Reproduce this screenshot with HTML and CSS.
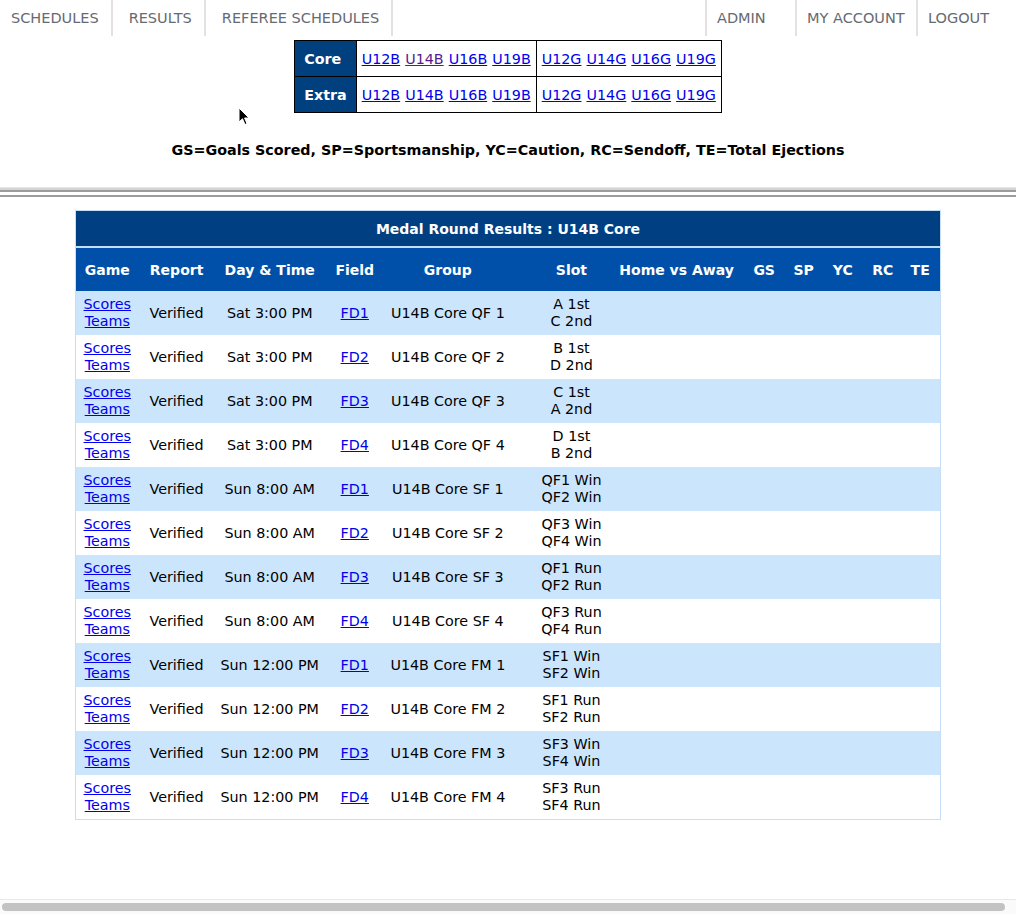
FILE: index.html
```html
<!DOCTYPE html>
<html lang="en">
<head>
<meta charset="utf-8">
<title>Medal Round Results</title>
<link rel="stylesheet" href="styles.css">
</head>
<body>
<nav class="topnav">
  <ul class="nav-left">
    <li class="nav-item first"><a href="#">SCHEDULES</a></li>
    <li class="nav-item"><a href="#">RESULTS</a></li>
    <li class="nav-item"><a href="#">REFEREE SCHEDULES</a></li>
  </ul>
  <ul class="nav-right">
    <li class="nav-item r-admin"><a href="#">ADMIN</a></li>
    <li class="nav-item r-account"><a href="#">MY ACCOUNT</a></li>
    <li class="nav-item r-logout"><a href="#">LOGOUT</a></li>
  </ul>
</nav>

<table class="divisions">
  <tr>
    <th>Core</th>
    <td><a href="#">U12B</a> <a href="#" class="visited">U14B</a> <a href="#">U16B</a> <a href="#">U19B</a></td>
    <td><a href="#">U12G</a> <a href="#">U14G</a> <a href="#">U16G</a> <a href="#">U19G</a></td>
  </tr>
  <tr>
    <th>Extra</th>
    <td><a href="#">U12B</a> <a href="#">U14B</a> <a href="#">U16B</a> <a href="#">U19B</a></td>
    <td><a href="#">U12G</a> <a href="#">U14G</a> <a href="#">U16G</a> <a href="#">U19G</a></td>
  </tr>
</table>

<p class="legend">GS=Goals Scored, SP=Sportsmanship, YC=Caution, RC=Sendoff, TE=Total Ejections</p>

<div class="rule"></div>

<table class="results">
  <colgroup>
    <col class="c-game"><col class="c-report"><col class="c-day"><col class="c-field"><col class="c-group"><col class="c-slot"><col class="c-home"><col class="c-gs"><col class="c-sp"><col class="c-yc"><col class="c-rc"><col class="c-te">
  </colgroup>
  <thead>
    <tr class="title-row"><th colspan="12">Medal Round Results : U14B Core</th></tr>
    <tr class="head-row">
      <th>Game</th><th>Report</th><th>Day &amp; Time</th><th>Field</th><th>Group</th><th class="slot">Slot</th><th>Home vs Away</th><th>GS</th><th>SP</th><th>YC</th><th>RC</th><th>TE</th>
    </tr>
  </thead>
  <tbody>
    <tr class="odd"><td><a href="#">Scores</a><br><a href="#">Teams</a></td><td>Verified</td><td>Sat 3:00 PM</td><td><a href="#">FD1</a></td><td>U14B Core QF 1</td><td class="slot">A 1st<br>C 2nd</td><td></td><td></td><td></td><td></td><td></td><td></td></tr>
    <tr><td><a href="#">Scores</a><br><a href="#">Teams</a></td><td>Verified</td><td>Sat 3:00 PM</td><td><a href="#">FD2</a></td><td>U14B Core QF 2</td><td class="slot">B 1st<br>D 2nd</td><td></td><td></td><td></td><td></td><td></td><td></td></tr>
    <tr class="odd"><td><a href="#">Scores</a><br><a href="#">Teams</a></td><td>Verified</td><td>Sat 3:00 PM</td><td><a href="#">FD3</a></td><td>U14B Core QF 3</td><td class="slot">C 1st<br>A 2nd</td><td></td><td></td><td></td><td></td><td></td><td></td></tr>
    <tr><td><a href="#">Scores</a><br><a href="#">Teams</a></td><td>Verified</td><td>Sat 3:00 PM</td><td><a href="#">FD4</a></td><td>U14B Core QF 4</td><td class="slot">D 1st<br>B 2nd</td><td></td><td></td><td></td><td></td><td></td><td></td></tr>
    <tr class="odd"><td><a href="#">Scores</a><br><a href="#">Teams</a></td><td>Verified</td><td>Sun 8:00 AM</td><td><a href="#">FD1</a></td><td>U14B Core SF 1</td><td class="slot">QF1 Win<br>QF2 Win</td><td></td><td></td><td></td><td></td><td></td><td></td></tr>
    <tr><td><a href="#">Scores</a><br><a href="#">Teams</a></td><td>Verified</td><td>Sun 8:00 AM</td><td><a href="#">FD2</a></td><td>U14B Core SF 2</td><td class="slot">QF3 Win<br>QF4 Win</td><td></td><td></td><td></td><td></td><td></td><td></td></tr>
    <tr class="odd"><td><a href="#">Scores</a><br><a href="#">Teams</a></td><td>Verified</td><td>Sun 8:00 AM</td><td><a href="#">FD3</a></td><td>U14B Core SF 3</td><td class="slot">QF1 Run<br>QF2 Run</td><td></td><td></td><td></td><td></td><td></td><td></td></tr>
    <tr><td><a href="#">Scores</a><br><a href="#">Teams</a></td><td>Verified</td><td>Sun 8:00 AM</td><td><a href="#">FD4</a></td><td>U14B Core SF 4</td><td class="slot">QF3 Run<br>QF4 Run</td><td></td><td></td><td></td><td></td><td></td><td></td></tr>
    <tr class="odd"><td><a href="#">Scores</a><br><a href="#">Teams</a></td><td>Verified</td><td>Sun 12:00 PM</td><td><a href="#">FD1</a></td><td>U14B Core FM 1</td><td class="slot">SF1 Win<br>SF2 Win</td><td></td><td></td><td></td><td></td><td></td><td></td></tr>
    <tr><td><a href="#">Scores</a><br><a href="#">Teams</a></td><td>Verified</td><td>Sun 12:00 PM</td><td><a href="#">FD2</a></td><td>U14B Core FM 2</td><td class="slot">SF1 Run<br>SF2 Run</td><td></td><td></td><td></td><td></td><td></td><td></td></tr>
    <tr class="odd"><td><a href="#">Scores</a><br><a href="#">Teams</a></td><td>Verified</td><td>Sun 12:00 PM</td><td><a href="#">FD3</a></td><td>U14B Core FM 3</td><td class="slot">SF3 Win<br>SF4 Win</td><td></td><td></td><td></td><td></td><td></td><td></td></tr>
    <tr><td><a href="#">Scores</a><br><a href="#">Teams</a></td><td>Verified</td><td>Sun 12:00 PM</td><td><a href="#">FD4</a></td><td>U14B Core FM 4</td><td class="slot">SF3 Run<br>SF4 Run</td><td></td><td></td><td></td><td></td><td></td><td></td></tr>
  </tbody>
</table>

<svg class="cursor" width="12" height="19" viewBox="0 0 12 19" aria-hidden="true">
  <path d="M1 1 L1 15 L4.5 11.8 L7 17.5 L9 16.6 L6.6 11 L11 11 Z" fill="#000" stroke="#fff" stroke-width="1"/>
</svg>

<div class="hscroll"><div class="hscroll-thumb"></div></div>
</body>
</html>
```

FILE: styles.css
```css
html, body {
  margin: 0;
  padding: 0;
  background: #ffffff;
}

body {
  font-family: "DejaVu Sans", Verdana, sans-serif;
  font-size: 14px;
  color: #000;
  height: 914px;
  overflow: hidden;
}

a {
  color: #0000ee;
}

a.visited {
  color: #551a8b;
}

/* top navigation */
.topnav {
  display: flex;
  justify-content: space-between;
  height: 36px;
}

.topnav ul {
  display: flex;
  margin: 0;
  padding: 0;
  list-style: none;
}

.nav-item {
  display: flex;
  align-items: center;
  height: 36px;
  box-sizing: border-box;
}

.nav-item a {
  color: #666a73;
  text-decoration: none;
  font-size: 14.5px;
}

.nav-left .nav-item {
  padding: 0 12px 0 16px;
  border-right: 2px solid #e6e1e1;
}

.nav-left .nav-item.first {
  padding-left: 11px;
}

.nav-right .nav-item {
  padding-left: 10px;
  border-left: 2px solid #e6e1e1;
}

.r-admin { width: 90px; }
.r-account { width: 121px; }
.r-logout { width: 100px; }

/* division links */
.divisions {
  margin: 4px auto 0;
  border-collapse: collapse;
  border: 1px solid #000;
}

.divisions th,
.divisions td {
  border: 1px solid #000;
  height: 35px;
  padding: 0 5px;
  white-space: nowrap;
  font-size: 14.3px;
  word-spacing: 0.5px;
}

.divisions th {
  background: #00407f;
  color: #fff;
  font-weight: bold;
  text-align: left;
  padding: 0 9px;
  width: 42px;
}

.legend {
  margin: 28px 0 0;
  line-height: 18px;
  text-align: center;
  font-weight: bold;
  font-size: 14.3px;
}

.rule {
  margin-top: 28px;
  height: 2px;
  background: #d4d4d4;
  border-top: 1px solid #e6e6e6;
  border-bottom: 2px solid #9c9c9c;
  box-shadow: 0 3px 0 #ffffff, 0 5px 0 #9c9c9c;
}

/* results table */
.results {
  margin: 18px 0 0 75px;
  width: 866px;
  table-layout: fixed;
  border-collapse: collapse;
  border: 1px solid #c6def3;
}

.c-game { width: 63px; }
.c-report { width: 76px; }
.c-day { width: 110px; }
.c-field { width: 60px; }
.c-group { width: 126px; }
.c-slot { width: 101px; }
.c-home { width: 129px; }
.c-gs { width: 46px; }
.c-sp { width: 33px; }
.c-yc { width: 45px; }
.c-rc { width: 35px; }
.c-te { width: 40px; }

.results th,
.results td {
  padding: 0;
  text-align: center;
  white-space: nowrap;
}

.title-row th {
  background: #003f82;
  color: #fff;
  height: 35px;
  font-weight: bold;
  border-bottom: 2px solid #c6def3;
}

.head-row th {
  background: #0050aa;
  color: #fff;
  height: 43px;
  font-weight: bold;
}

.results td {
  height: 44px;
  line-height: 17px;
  font-size: 14.3px;
}

.results tr.odd td {
  background: #cbe5fc;
}

.results .slot {
  padding-left: 20px;
}

/* mouse pointer in screenshot */
.cursor {
  position: absolute;
  left: 238px;
  top: 107px;
}

/* horizontal scrollbar */
.hscroll {
  position: fixed;
  left: 0;
  right: 0;
  bottom: 0;
  height: 15px;
  background: #fafafa;
  border-top: 1px solid #e8e8e8;
  box-sizing: border-box;
  padding: 3px 11px 3px 2px;
}

.hscroll-thumb {
  height: 8px;
  border-radius: 4px;
  background: #c2c2c2;
}
```
